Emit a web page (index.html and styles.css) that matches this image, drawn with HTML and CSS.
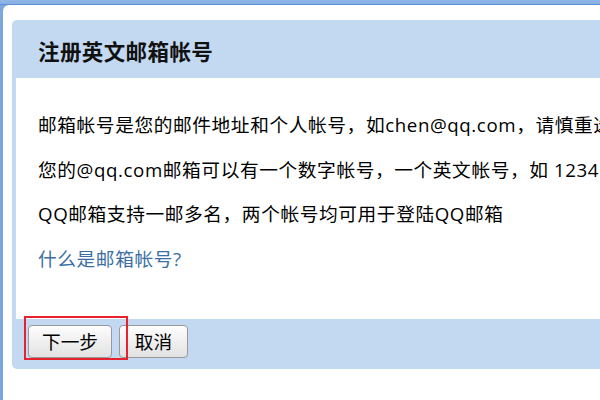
FILE: index.html
```html
<!DOCTYPE html>
<html lang="zh-CN">
<head>
<meta charset="utf-8">
<title>注册英文邮箱帐号</title>
<link rel="stylesheet" href="styles.css">
</head>
<body>
<div class="frame">
  <div class="panel">
    <div class="dialog">
      <div class="dialog-head">
        <h1 class="title">注册英文邮箱帐号</h1>
      </div>
      <div class="dialog-body">
        <p class="line">邮箱帐号是您的邮件地址和个人帐号，如chen@qq.com，请慎重选择。</p>
        <p class="line">您的@qq.com邮箱可以有一个数字帐号，一个英文帐号，如 12345@qq.com</p>
        <p class="line">QQ邮箱支持一邮多名，两个帐号均可用于登陆QQ邮箱</p>
        <p class="line"><a class="help" href="#">什么是邮箱帐号?</a></p>
      </div>
      <div class="dialog-foot">
        <span class="btn-wrap">
          <button class="btn btn-next">下一步</button>
          <span class="highlight"></span>
        </span>
        <button class="btn btn-cancel">取消</button>
      </div>
    </div>
  </div>
</div>
</body>
</html>
```

FILE: styles.css
```css
html, body {
  margin: 0;
  padding: 0;
  width: 600px;
  height: 400px;
  overflow: hidden;
}
body {
  font-family: "Open Sans", "Noto Sans CJK SC", sans-serif;
  color: #000;
}
.frame {
  height: 400px;
  background: linear-gradient(#8fb6e7 0, #86afe3 4px, #5e91d8 4px, #5e91d8 5px, #7ba7de 5px);
  padding-top: 5px;
  box-sizing: border-box;
}
.panel {
  margin-left: 3px;
  height: 100%;
  background: #fff;
  border-top-left-radius: 6px;
  padding: 15px 0 0 9px;
  box-sizing: border-box;
}
.dialog {
  width: 700px;
  background: #c3d9f2;
  border-radius: 5px;
}
.dialog-head {
  height: 58px;
  display: flex;
  align-items: center;
  padding: 3px 0 0 26px;
  box-sizing: border-box;
}
.title {
  margin: 0;
  font-size: 21.5px;
  font-weight: bold;
  color: #111;
  letter-spacing: 0.4px;
}
.dialog-body {
  margin-left: 4px;
  background: #fff;
  padding: 25px 0 38px 22px;
  font-size: 18.7px;
  letter-spacing: 0.6px;
  white-space: nowrap;
}
.line {
  margin: 0;
  line-height: 44.5px;
}
.help {
  color: #3a6ea5;
  text-decoration: none;
}
.dialog-foot {
  height: 50px;
  padding: 6px 0 0 16px;
  box-sizing: border-box;
  display: flex;
  align-items: flex-start;
  gap: 7px;
}
.btn-wrap {
  position: relative;
  display: inline-flex;
}
.btn {
  height: 33px;
  border: 1px solid #999;
  border-radius: 4px;
  background: linear-gradient(#fdfdfd, #e2e2e2);
  font-family: "Open Sans", "Noto Sans CJK SC", sans-serif;
  font-size: 18.7px;
  color: #000;
  padding: 0;
  line-height: 31px;
}
.btn-next {
  width: 84px;
}
.btn-cancel {
  width: 69px;
}
.highlight {
  position: absolute;
  left: -4px;
  top: -9px;
  width: 104px;
  height: 44px;
  border: 2px solid #e8212e;
  box-sizing: border-box;
  pointer-events: none;
}
```
